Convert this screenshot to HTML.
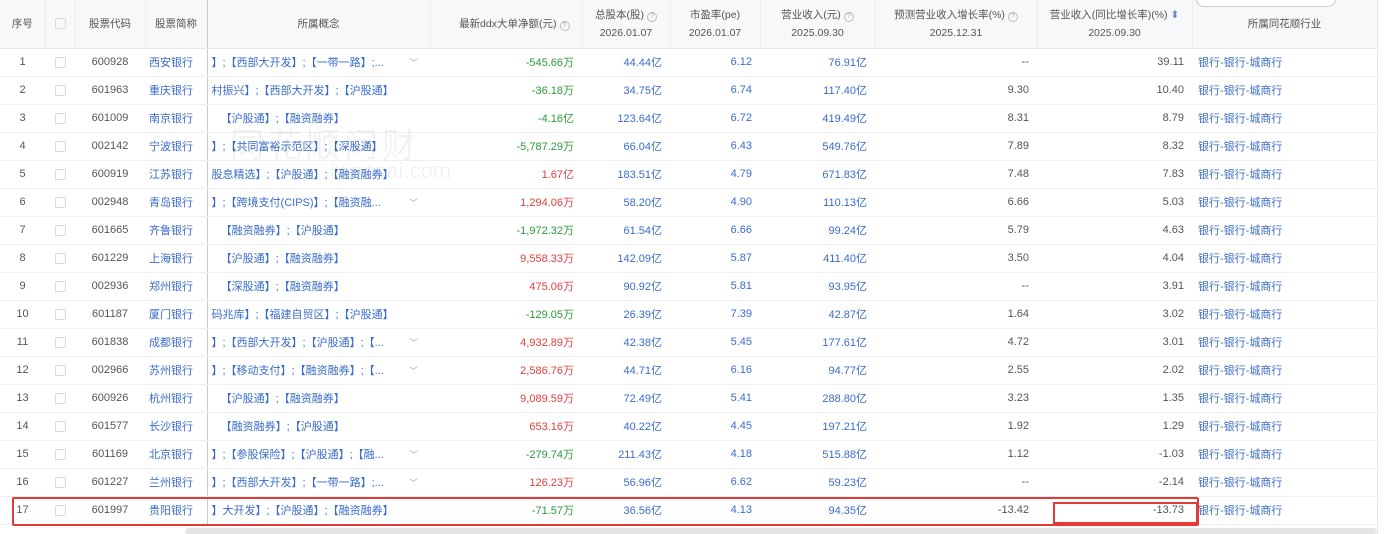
<!DOCTYPE html>
<html><head><meta charset="utf-8"><style>
*{margin:0;padding:0;box-sizing:border-box}
body{width:1384px;height:534px;overflow:hidden;background:#fff;font-family:"Liberation Sans","Noto Sans CJK SC",sans-serif;font-size:11px;color:#555;position:relative}
table{border-collapse:collapse;table-layout:fixed;width:1377px;position:absolute;left:0;top:0}
th{height:48px;background:#f7f8fa;font-weight:normal;color:#555;font-size:10.5px;line-height:18px;border-right:1px solid #ebedf0;border-bottom:1px solid #e6e8eb}
td{height:28px;border-bottom:1px solid #eef0f2;white-space:nowrap;overflow:hidden}
.c{text-align:center}.r{text-align:right;padding-right:8px}
.l{color:#3a6ccc}
.g{color:#2a9a3a}.d{color:#e04040}
.cb{display:inline-block;width:11px;height:11px;border:1px solid #d8dadd;border-radius:2px;vertical-align:middle}
.q{display:inline-block;width:10px;height:10px;border:1px solid #bbb;border-radius:50%;font-size:7px;line-height:8px;color:#aaa;text-align:center;margin-left:3px}
.cn{padding-left:4px;position:relative}
.ar{position:absolute;right:12px;top:7px;color:#aaa;font-size:9px}
td:nth-child(4){border-right:1px solid #ccc}
</style></head><body>
<table>
<colgroup><col style="width:45px"><col style="width:30px"><col style="width:70px"><col style="width:62px"><col style="width:223px"><col style="width:152px"><col style="width:88px"><col style="width:90px"><col style="width:115px"><col style="width:162px"><col style="width:155px"><col style="width:185px"></colgroup>
<tr><th>序号</th><th><span class="cb"></span></th><th>股票代码</th><th style="border-right:1px solid #ccc">股票简称</th><th>所属概念</th><th style="text-align:right;padding-right:12px">最新ddx大单净额(元)<span class="q">?</span></th><th>总股本(股)<span class="q">?</span><br>2026.01.07</th><th>市盈率(pe)<br>2026.01.07</th><th>营业收入(元)<span class="q">?</span><br>2025.09.30</th><th>预测营业收入增长率(%)<span class="q">?</span><br>2025.12.31</th><th>营业收入(同比增长率)(%) <span style="color:#6a8ad0">⬍</span><br>2025.09.30</th><th>所属同花顺行业</th></tr>
<tr><td class="c">1</td><td class="c"><span class="cb"></span></td><td class="c">600928</td><td class="l" style="padding-left:4px">西安银行</td><td class="cn l">】;【西部大开发】;【一带一路】;...<span class="ar">﹀</span></td><td class="r g">-545.66万</td><td class="r l">44.44亿</td><td class="r l">6.12</td><td class="r l">76.91亿</td><td class="r">--</td><td class="r">39.11</td><td class="l" style="padding-left:6px">银行-银行-城商行</td></tr>
<tr><td class="c">2</td><td class="c"><span class="cb"></span></td><td class="c">601963</td><td class="l" style="padding-left:4px">重庆银行</td><td class="cn l">村振兴】;【西部大开发】;【沪股通】</td><td class="r g">-36.18万</td><td class="r l">34.75亿</td><td class="r l">6.74</td><td class="r l">117.40亿</td><td class="r">9.30</td><td class="r">10.40</td><td class="l" style="padding-left:6px">银行-银行-城商行</td></tr>
<tr><td class="c">3</td><td class="c"><span class="cb"></span></td><td class="c">601009</td><td class="l" style="padding-left:4px">南京银行</td><td class="cn l">&nbsp;&nbsp;&nbsp;【沪股通】;【融资融券】</td><td class="r g">-4.16亿</td><td class="r l">123.64亿</td><td class="r l">6.72</td><td class="r l">419.49亿</td><td class="r">8.31</td><td class="r">8.79</td><td class="l" style="padding-left:6px">银行-银行-城商行</td></tr>
<tr><td class="c">4</td><td class="c"><span class="cb"></span></td><td class="c">002142</td><td class="l" style="padding-left:4px">宁波银行</td><td class="cn l">】;【共同富裕示范区】;【深股通】</td><td class="r g">-5,787.29万</td><td class="r l">66.04亿</td><td class="r l">6.43</td><td class="r l">549.76亿</td><td class="r">7.89</td><td class="r">8.32</td><td class="l" style="padding-left:6px">银行-银行-城商行</td></tr>
<tr><td class="c">5</td><td class="c"><span class="cb"></span></td><td class="c">600919</td><td class="l" style="padding-left:4px">江苏银行</td><td class="cn l">股息精选】;【沪股通】;【融资融券】</td><td class="r d">1.67亿</td><td class="r l">183.51亿</td><td class="r l">4.79</td><td class="r l">671.83亿</td><td class="r">7.48</td><td class="r">7.83</td><td class="l" style="padding-left:6px">银行-银行-城商行</td></tr>
<tr><td class="c">6</td><td class="c"><span class="cb"></span></td><td class="c">002948</td><td class="l" style="padding-left:4px">青岛银行</td><td class="cn l">】;【跨境支付(CIPS)】;【融资融...<span class="ar">﹀</span></td><td class="r d">1,294.06万</td><td class="r l">58.20亿</td><td class="r l">4.90</td><td class="r l">110.13亿</td><td class="r">6.66</td><td class="r">5.03</td><td class="l" style="padding-left:6px">银行-银行-城商行</td></tr>
<tr><td class="c">7</td><td class="c"><span class="cb"></span></td><td class="c">601665</td><td class="l" style="padding-left:4px">齐鲁银行</td><td class="cn l">&nbsp;&nbsp;&nbsp;【融资融券】;【沪股通】</td><td class="r g">-1,972.32万</td><td class="r l">61.54亿</td><td class="r l">6.66</td><td class="r l">99.24亿</td><td class="r">5.79</td><td class="r">4.63</td><td class="l" style="padding-left:6px">银行-银行-城商行</td></tr>
<tr><td class="c">8</td><td class="c"><span class="cb"></span></td><td class="c">601229</td><td class="l" style="padding-left:4px">上海银行</td><td class="cn l">&nbsp;&nbsp;&nbsp;【沪股通】;【融资融券】</td><td class="r d">9,558.33万</td><td class="r l">142.09亿</td><td class="r l">5.87</td><td class="r l">411.40亿</td><td class="r">3.50</td><td class="r">4.04</td><td class="l" style="padding-left:6px">银行-银行-城商行</td></tr>
<tr><td class="c">9</td><td class="c"><span class="cb"></span></td><td class="c">002936</td><td class="l" style="padding-left:4px">郑州银行</td><td class="cn l">&nbsp;&nbsp;&nbsp;【深股通】;【融资融券】</td><td class="r d">475.06万</td><td class="r l">90.92亿</td><td class="r l">5.81</td><td class="r l">93.95亿</td><td class="r">--</td><td class="r">3.91</td><td class="l" style="padding-left:6px">银行-银行-城商行</td></tr>
<tr><td class="c">10</td><td class="c"><span class="cb"></span></td><td class="c">601187</td><td class="l" style="padding-left:4px">厦门银行</td><td class="cn l">码兆库】;【福建自贸区】;【沪股通】</td><td class="r g">-129.05万</td><td class="r l">26.39亿</td><td class="r l">7.39</td><td class="r l">42.87亿</td><td class="r">1.64</td><td class="r">3.02</td><td class="l" style="padding-left:6px">银行-银行-城商行</td></tr>
<tr><td class="c">11</td><td class="c"><span class="cb"></span></td><td class="c">601838</td><td class="l" style="padding-left:4px">成都银行</td><td class="cn l">】;【西部大开发】;【沪股通】;【...<span class="ar">﹀</span></td><td class="r d">4,932.89万</td><td class="r l">42.38亿</td><td class="r l">5.45</td><td class="r l">177.61亿</td><td class="r">4.72</td><td class="r">3.01</td><td class="l" style="padding-left:6px">银行-银行-城商行</td></tr>
<tr><td class="c">12</td><td class="c"><span class="cb"></span></td><td class="c">002966</td><td class="l" style="padding-left:4px">苏州银行</td><td class="cn l">】;【移动支付】;【融资融券】;【...<span class="ar">﹀</span></td><td class="r d">2,586.76万</td><td class="r l">44.71亿</td><td class="r l">6.16</td><td class="r l">94.77亿</td><td class="r">2.55</td><td class="r">2.02</td><td class="l" style="padding-left:6px">银行-银行-城商行</td></tr>
<tr><td class="c">13</td><td class="c"><span class="cb"></span></td><td class="c">600926</td><td class="l" style="padding-left:4px">杭州银行</td><td class="cn l">&nbsp;&nbsp;&nbsp;【沪股通】;【融资融券】</td><td class="r d">9,089.59万</td><td class="r l">72.49亿</td><td class="r l">5.41</td><td class="r l">288.80亿</td><td class="r">3.23</td><td class="r">1.35</td><td class="l" style="padding-left:6px">银行-银行-城商行</td></tr>
<tr><td class="c">14</td><td class="c"><span class="cb"></span></td><td class="c">601577</td><td class="l" style="padding-left:4px">长沙银行</td><td class="cn l">&nbsp;&nbsp;&nbsp;【融资融券】;【沪股通】</td><td class="r d">653.16万</td><td class="r l">40.22亿</td><td class="r l">4.45</td><td class="r l">197.21亿</td><td class="r">1.92</td><td class="r">1.29</td><td class="l" style="padding-left:6px">银行-银行-城商行</td></tr>
<tr><td class="c">15</td><td class="c"><span class="cb"></span></td><td class="c">601169</td><td class="l" style="padding-left:4px">北京银行</td><td class="cn l">】;【参股保险】;【沪股通】;【融...<span class="ar">﹀</span></td><td class="r g">-279.74万</td><td class="r l">211.43亿</td><td class="r l">4.18</td><td class="r l">515.88亿</td><td class="r">1.12</td><td class="r">-1.03</td><td class="l" style="padding-left:6px">银行-银行-城商行</td></tr>
<tr><td class="c">16</td><td class="c"><span class="cb"></span></td><td class="c">601227</td><td class="l" style="padding-left:4px">兰州银行</td><td class="cn l">】;【西部大开发】;【一带一路】;...<span class="ar">﹀</span></td><td class="r d">126.23万</td><td class="r l">56.96亿</td><td class="r l">6.62</td><td class="r l">59.23亿</td><td class="r">--</td><td class="r">-2.14</td><td class="l" style="padding-left:6px">银行-银行-城商行</td></tr>
<tr><td class="c">17</td><td class="c"><span class="cb"></span></td><td class="c">601997</td><td class="l" style="padding-left:4px">贵阳银行</td><td class="cn l">】大开发】;【沪股通】;【融资融券】</td><td class="r g">-71.57万</td><td class="r l">36.56亿</td><td class="r l">4.13</td><td class="r l">94.35亿</td><td class="r">-13.42</td><td class="r">-13.73</td><td class="l" style="padding-left:6px">银行-银行-城商行</td></tr>
</table>
<div style="position:absolute;left:1196px;top:-10px;width:140px;height:17px;border:1px solid #ccc;border-radius:8px;background:#fff"></div>
<div style="position:absolute;left:1377px;top:0;width:1px;height:534px;background:#e6e6e6"></div>
<div style="position:absolute;left:12px;top:497px;width:1187px;height:29px;border:2px solid #e53935;border-radius:2px"></div>
<div style="position:absolute;left:1053px;top:502px;width:145px;height:22px;border:2px solid #e53935"></div>
<div style="position:absolute;left:185px;top:528px;width:1192px;height:6px;background:#e3e4e6;border-radius:3px"></div>
<div style="position:absolute;left:230px;top:118px;font-size:34px;color:rgba(0,0,0,0.05);letter-spacing:4px">同花顺问财</div>
<div style="position:absolute;left:330px;top:158px;font-size:22px;color:rgba(0,0,0,0.05)">iwencai.com</div>
</body></html>
